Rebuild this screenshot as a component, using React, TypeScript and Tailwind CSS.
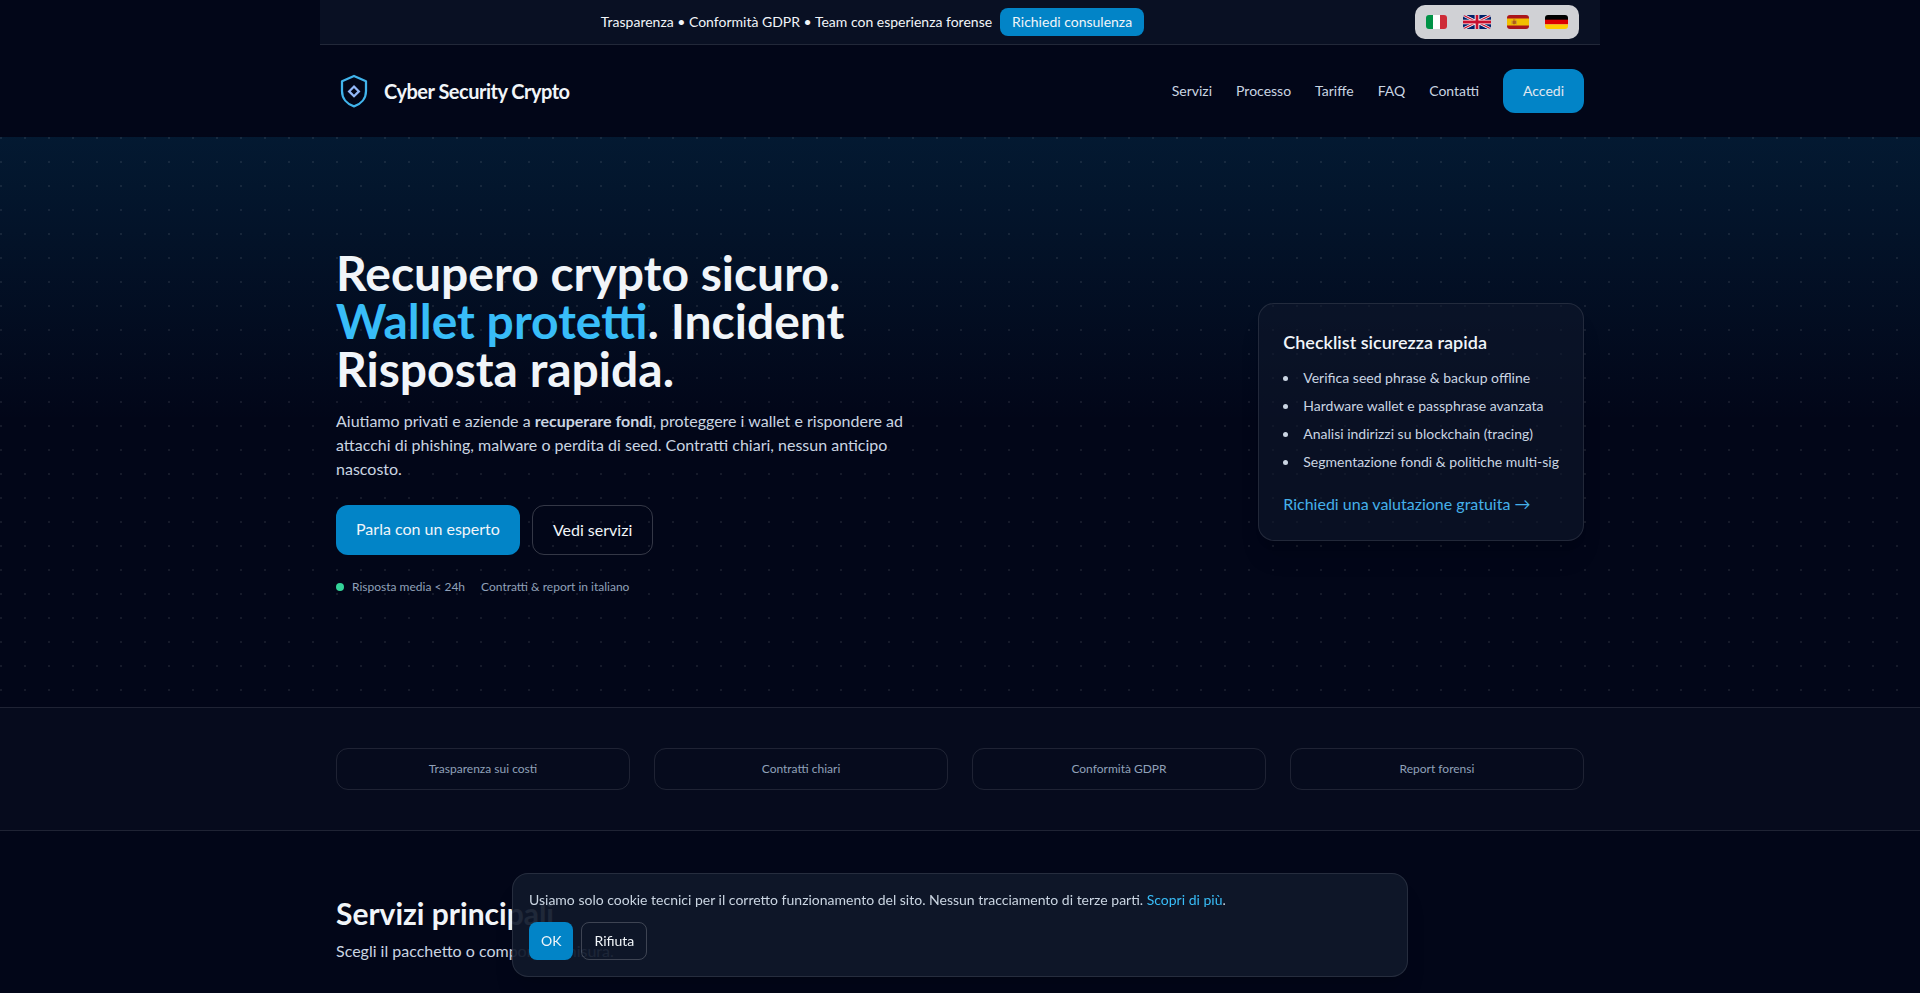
import type { ReactNode } from "react";

const NAV = ["Servizi", "Processo", "Tariffe", "FAQ", "Contatti"];

const CHECKLIST = [
  "Verifica seed phrase & backup offline",
  "Hardware wallet e passphrase avanzata",
  "Analisi indirizzi su blockchain (tracing)",
  "Segmentazione fondi & politiche multi-sig",
];

const TRUST = ["Trasparenza sui costi", "Contratti chiari", "Conformità GDPR", "Report forensi"];

function FlagButton({ label, children }: { label: string; children: ReactNode }) {
  return (
    <button type="button" aria-label={label} className="block overflow-hidden rounded-[3px]">
      {children}
    </button>
  );
}

function Flags() {
  return (
    <div className="flex items-center gap-4 rounded-[10px] bg-[#d0d1d5] px-[11px] py-2.5">
      <FlagButton label="Italiano">
        <svg width="21" height="14" viewBox="0 0 21 14" className="block">
          <rect width="7" height="14" fill="#009246" />
          <rect x="7" width="7" height="14" fill="#fff" />
          <rect x="14" width="7" height="14" fill="#ce2b37" />
        </svg>
      </FlagButton>
      <FlagButton label="English">
        <svg width="28" height="14" viewBox="0 0 60 30" className="block">
          <rect width="60" height="30" fill="#012169" />
          <path d="M0 0L60 30M60 0L0 30" stroke="#fff" strokeWidth="6" />
          <path d="M0 0L60 30M60 0L0 30" stroke="#c8102e" strokeWidth="2.4" />
          <path d="M30 0V30M0 15H60" stroke="#fff" strokeWidth="10" />
          <path d="M30 0V30M0 15H60" stroke="#c8102e" strokeWidth="6" />
        </svg>
      </FlagButton>
      <FlagButton label="Español">
        <svg width="22" height="14" viewBox="0 0 22 14" className="block">
          <rect width="22" height="14" fill="#aa151b" />
          <rect y="3.5" width="22" height="7" fill="#f1bf00" />
          <rect x="5.5" y="5.5" width="3.4" height="3.8" rx="1" fill="#ad5a1c" />
          <rect x="6" y="4.4" width="2.4" height="1.2" fill="#c8741a" />
          <path d="M4.9 5.5V9.4M9.5 5.5V9.4" stroke="#b98a4a" strokeWidth="0.7" />
        </svg>
      </FlagButton>
      <FlagButton label="Deutsch">
        <svg width="23" height="14" viewBox="0 0 23 14" className="block">
          <rect width="23" height="5" fill="#000" />
          <rect y="4.7" width="23" height="4.7" fill="#dd0000" />
          <rect y="9.4" width="23" height="4.6" fill="#ffce00" />
        </svg>
      </FlagButton>
    </div>
  );
}

function Logo() {
  return (
    <svg viewBox="0 0 48 48" fill="none" aria-hidden="true" className="h-9 w-9">
      <path
        d="M24 4L40 11V24C40 34 33.5 41.5 24 44.5C14.5 41.5 8 34 8 24V11Z"
        stroke="#41b4ec"
        strokeWidth="3"
        strokeLinejoin="round"
      />
      <path d="M24 18L30.5 24.5L24 31L17.5 24.5Z" stroke="#93b8f8" strokeWidth="3" />
    </svg>
  );
}

function TopBar() {
  return (
    <div className="mx-auto flex h-[45px] max-w-7xl items-center gap-1.5 border-b border-white/10 bg-slate-900/60 pr-[21px] pl-4">
      <div className="flex flex-1 items-center justify-center gap-2 text-sm text-slate-100">
        <span>Trasparenza • Conformità GDPR • Team con esperienza forense</span>
        <a href="#consulenza" className="rounded-lg bg-[#0284c7] px-3 py-1 text-slate-100">
          Richiedi consulenza
        </a>
      </div>
      <Flags />
    </div>
  );
}

function Header() {
  return (
    <header className="mx-auto flex max-w-7xl items-center justify-between px-4 py-6">
      <a href="#top" className="flex items-center gap-3">
        <Logo />
        <span className="text-xl font-bold tracking-tight text-slate-100">
          Cyber Security Crypto
        </span>
      </a>
      <nav className="flex items-center gap-6 text-sm text-slate-300">
        {NAV.map((item) => (
          <a key={item} href={`#${item.toLowerCase()}`}>
            {item}
          </a>
        ))}
        <a href="#accedi" className="rounded-xl bg-[#0284c7] px-5 py-3 text-slate-200">
          Accedi
        </a>
      </nav>
    </header>
  );
}

function Hero() {
  return (
    <section className="bg-[linear-gradient(to_bottom,rgba(14,165,233,0.12),transparent_50%)]">
      <div className="bg-[radial-gradient(circle_at_1px_1px,rgba(255,255,255,0.08)_1px,transparent_1px)] bg-size-[24px_24px]">
        <div className="mx-auto flex max-w-7xl items-center justify-between gap-10 px-4 py-28">
          <div className="max-w-xl">
            <h1 className="text-5xl leading-none font-bold text-slate-100">
              Recupero crypto sicuro. <span className="text-[#38bdf8]">Wallet protetti</span>.
              Incident Risposta rapida.
            </h1>
            <p className="mt-4 text-base text-slate-300">
              Aiutiamo privati e aziende a <strong className="font-bold">recuperare fondi</strong>,
              proteggere i wallet e rispondere ad attacchi di phishing, malware o perdita di seed.
              Contratti chiari, nessun anticipo nascosto.
            </p>
            <div className="mt-6 flex gap-3">
              <a href="#contatti" className="rounded-xl bg-[#0284c7] px-5 py-3 text-slate-100">
                Parla con un esperto
              </a>
              <a
                href="#servizi"
                className="rounded-xl border border-white/20 px-5 py-3 text-slate-100"
              >
                Vedi servizi
              </a>
            </div>
            <div className="mt-6 flex items-center gap-4 text-xs text-slate-400">
              <span className="flex items-center gap-2">
                <span className="h-2 w-2 rounded-full bg-[#34d399]" />
                Risposta media &lt; 24h
              </span>
              <span>Contratti &amp; report in italiano</span>
            </div>
          </div>

          <aside className="rounded-2xl border border-white/10 bg-slate-900/60 p-6 shadow-xl">
            <h2 className="text-lg leading-7 font-semibold text-slate-100">
              Checklist sicurezza rapida
            </h2>
            <ul className="mt-3 list-inside list-disc space-y-2 text-sm text-slate-300">
              {CHECKLIST.map((item) => (
                <li key={item}>{item}</li>
              ))}
            </ul>
            <a href="#valutazione" className="mt-5 block text-[#45b0ea]">
              Richiedi una valutazione gratuita →
            </a>
          </aside>
        </div>
      </div>
    </section>
  );
}

function TrustStrip() {
  return (
    <section className="border-y border-white/10 bg-slate-900/30">
      <ul className="mx-auto grid max-w-7xl grid-cols-4 gap-6 px-4 py-10 text-center text-xs text-slate-400">
        {TRUST.map((item) => (
          <li key={item} className="rounded-xl border border-white/10 py-3">
            {item}
          </li>
        ))}
      </ul>
    </section>
  );
}

function CookieBanner() {
  return (
    <div
      role="region"
      aria-label="Cookie"
      className="fixed inset-x-4 bottom-4 mx-auto max-w-4xl rounded-2xl border border-white/10 bg-[#0f182a]/93 p-4 text-sm text-slate-300 shadow-xl"
    >
      <p>
        Usiamo solo cookie tecnici per il corretto funzionamento del sito. Nessun tracciamento di
        terze parti.{" "}
        <a href="#cookie" className="text-[#38bdf8]">
          Scopri di più
        </a>
        .
      </p>
      <div className="mt-3 flex gap-2 text-slate-100">
        <button type="button" className="rounded-lg bg-[#0284c7] px-3 py-2">
          OK
        </button>
        <button type="button" className="rounded-lg border border-white/20 px-3 py-2">
          Rifiuta
        </button>
      </div>
    </div>
  );
}

export default function App() {
  return (
    <div className="min-h-screen bg-slate-950 font-[Lato,sans-serif] text-slate-100">
      <TopBar />
      <Header />
      <main>
        <Hero />
        <TrustStrip />
        <section className="mx-auto max-w-7xl px-4 pt-16">
          <h2 className="text-3xl font-bold">Servizi principali</h2>
          <p className="mt-2 text-slate-300">Scegli il pacchetto o componi su misura.</p>
        </section>
      </main>
      <CookieBanner />
    </div>
  );
}
